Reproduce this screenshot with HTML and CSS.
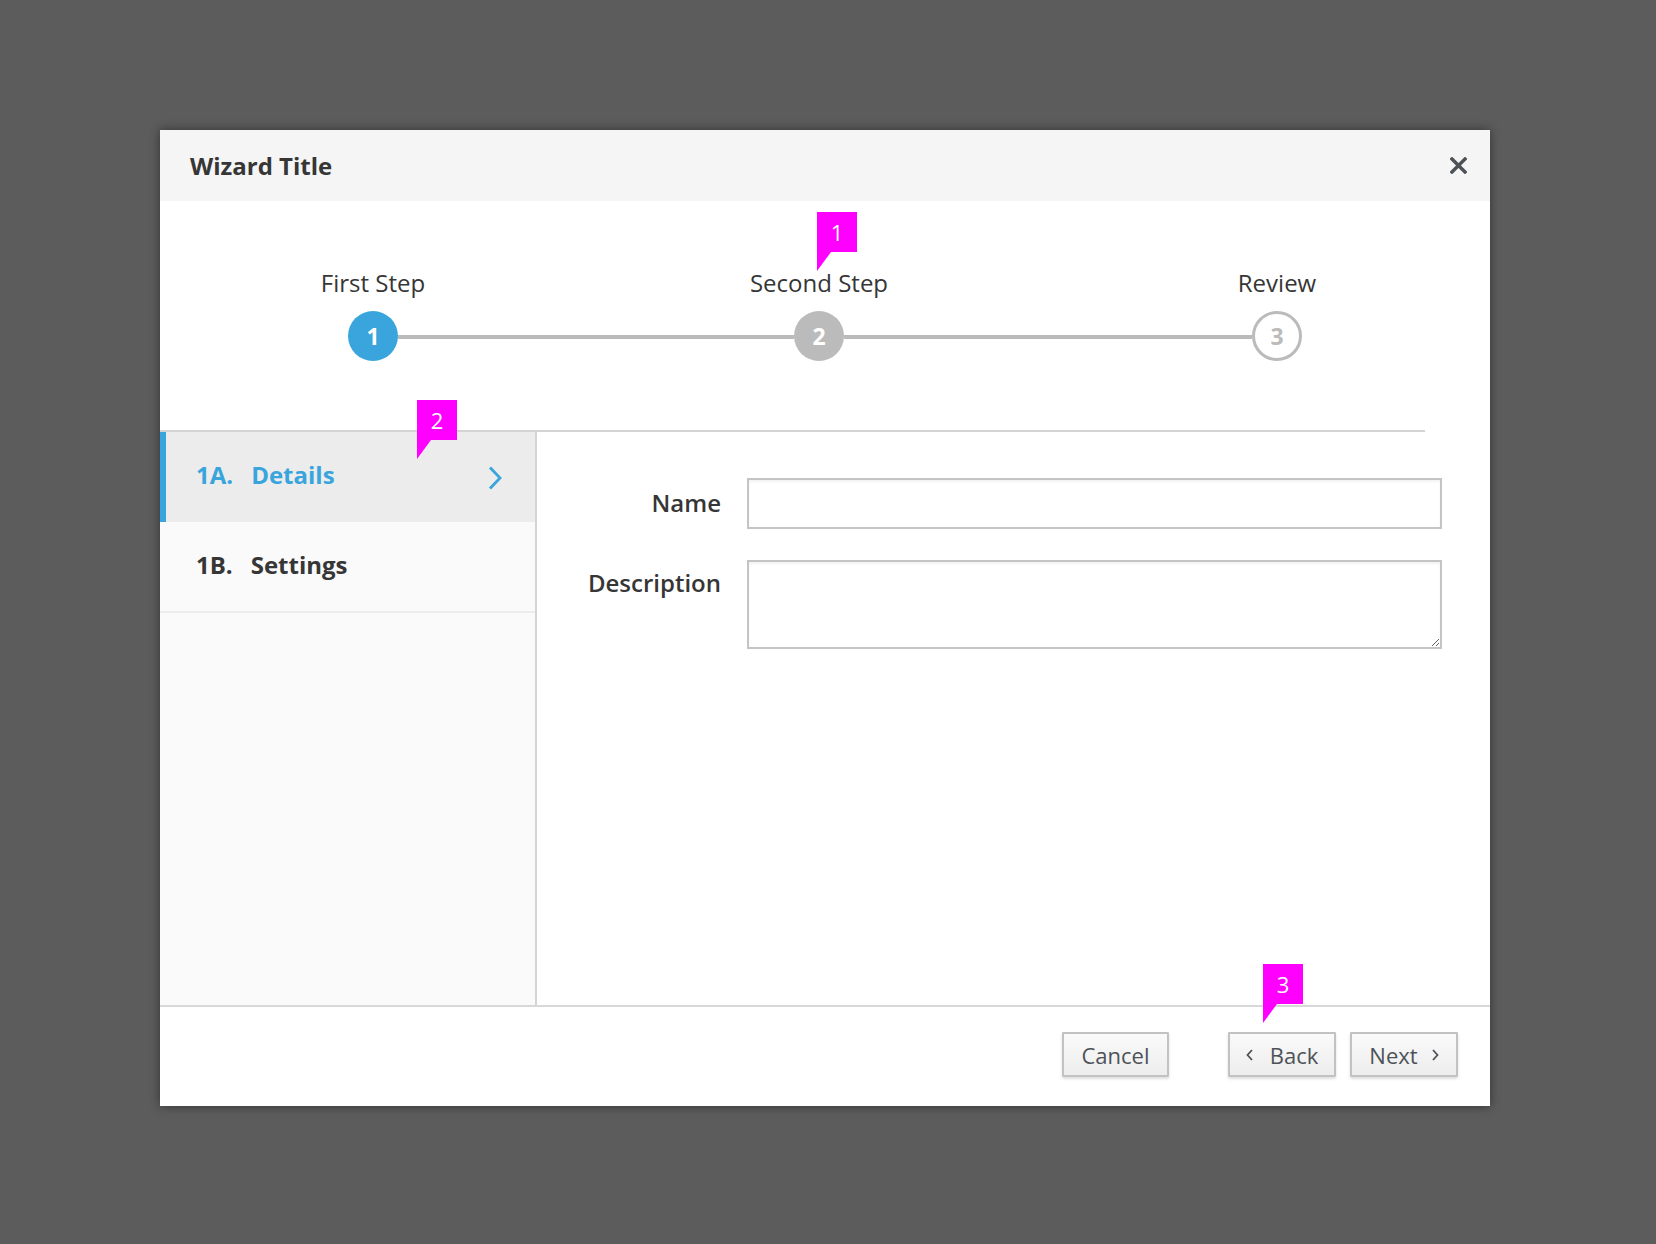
FILE: index.html
```html
<!DOCTYPE html>
<html>
<head>
<meta charset="utf-8">
<title>Wizard</title>
<link rel="stylesheet" href="styles.css">
</head>
<body>
<div class="stage">
  <div class="dialog">
    <div class="header">
      <h1 class="title">Wizard Title</h1>
      <button class="close" aria-label="Close">
        <svg width="17" height="17" viewBox="0 0 17 17"><path d="M2 2 L15 15 M15 2 L2 15" stroke="#4d5258" stroke-width="3.4" stroke-linecap="square" fill="none"/></svg>
      </button>
    </div>

    <div class="steps">
      <div class="step">
        <div class="step-label">First Step</div>
        <div class="step-circle active">1</div>
      </div>
      <div class="connector c1"></div>
      <div class="step">
        <div class="step-label">Second Step</div>
        <div class="step-circle done">2</div>
      </div>
      <div class="connector c2"></div>
      <div class="step">
        <div class="step-label">Review</div>
        <div class="step-circle future">3</div>
      </div>
    </div>

    <div class="rule"></div>

    <div class="body">
      <nav class="sidebar">
        <div class="nav-item active">
          <span class="nav-num">1A.</span><span class="nav-name">Details</span>
          <svg class="nav-chev" width="14" height="24" viewBox="0 0 14 24"><path d="M2 1.5 L12 12 L2 22.5" stroke="#39a5dc" stroke-width="2.8" fill="none"/></svg>
        </div>
        <div class="nav-item">
          <span class="nav-num">1B.</span><span class="nav-name">Settings</span>
        </div>
      </nav>
      <main class="content">
        <form class="form">
          <label class="form-label lbl-name" for="name">Name</label>
          <input class="form-input" id="name" type="text">
          <label class="form-label lbl-desc" for="desc">Description</label>
          <textarea class="form-textarea" id="desc"></textarea>
        </form>
      </main>
    </div>

    <div class="footer">
      <button class="btn btn-cancel">Cancel</button>
      <button class="btn btn-back">
        <svg width="7" height="12" viewBox="0 0 7 12"><path d="M6 1 L1.5 6 L6 11" stroke="#4d5258" stroke-width="1.8" fill="none"/></svg>
        <span>Back</span>
      </button>
      <button class="btn btn-next">
        <span>Next</span>
        <svg width="7" height="12" viewBox="0 0 7 12"><path d="M1 1 L5.5 6 L1 11" stroke="#4d5258" stroke-width="1.8" fill="none"/></svg>
      </button>
    </div>

    <div class="badge badge-1">1</div>
    <div class="badge badge-2">2</div>
    <div class="badge badge-3">3</div>
  </div>
</div>
</body>
</html>
```

FILE: styles.css
```css
* {
  box-sizing: border-box;
}

html, body {
  margin: 0;
  padding: 0;
  background: #5c5c5c;
  font-family: "Open Sans", "Noto Sans", "Liberation Sans", sans-serif;
  color: #363636;
}

.stage {
  padding: 130px 0 0 160px;
  width: 1656px;
  height: 1244px;
}

.dialog {
  position: relative;
  width: 1330px;
  height: 976px;
  background: #fff;
  display: flex;
  flex-direction: column;
  box-shadow: 0 0 10px rgba(0, 0, 0, 0.45);
}

/* Header */
.header {
  height: 71px;
  flex: none;
  background: #f5f5f5;
  display: flex;
  align-items: center;
  justify-content: space-between;
  padding: 0 23px 0 30px;
}

.title {
  margin: 0;
  font-size: 24px;
  font-weight: 700;
  line-height: 32px;
  color: #363636;
}

.close {
  border: 0;
  background: none;
  padding: 0;
  width: 17px;
  height: 17px;
  display: flex;
}

/* Steps */
.steps {
  height: 229px;
  flex: none;
  display: flex;
  align-items: flex-start;
  padding: 66px 0 0 188px;
}

.step {
  width: 50px;
  flex: none;
  display: flex;
  flex-direction: column;
  align-items: center;
}

.step-label {
  font-size: 24px;
  line-height: 32px;
  white-space: nowrap;
  color: #363636;
  margin-bottom: 12px;
}

.step-circle {
  width: 50px;
  height: 50px;
  border-radius: 50%;
  display: flex;
  align-items: center;
  justify-content: center;
  font-size: 23px;
  font-weight: 700;
  color: #fff;
}

.step-circle.active {
  background: #39a5dc;
}

.step-circle.done {
  background: #bbbbbb;
}

.step-circle.future {
  background: #fff;
  border: 3px solid #bbbbbb;
  color: #bbbbbb;
}

.connector {
  flex: none;
  height: 4px;
  background: #bbbbbb;
  margin-top: 68px;
}

.c1 {
  width: 396px;
}

.c2 {
  width: 408px;
}

.rule {
  flex: none;
  height: 2px;
  background: #d4d4d4;
  margin-right: 65px;
}

/* Body */
.body {
  flex: 1;
  display: flex;
  min-height: 0;
}

.sidebar {
  width: 377px;
  flex: none;
  background: #fafafa;
  border-right: 2px solid #d4d4d4;
}

.nav-item {
  height: 90px;
  display: flex;
  align-items: flex-start;
  padding: 27px 33px 0 36px;
  font-size: 24px;
  line-height: 32px;
  font-weight: 700;
  color: #363636;
}

.nav-item + .nav-item {
  height: 91px;
  border-bottom: 2px solid #ececec;
}

.nav-item.active {
  background: #ececec;
  color: #39a5dc;
  border-left: 6px solid #39a5dc;
  padding-left: 30px;
}

.nav-num {
  margin-right: 18px;
}

.nav-chev {
  margin-left: auto;
  margin-top: 7px;
}

.content {
  flex: 1;
  padding: 46px 48px 0 0;
}

.form {
  display: grid;
  grid-template-columns: 184px 1fr;
  column-gap: 26px;
  row-gap: 31px;
  margin: 0;
}

.form-label {
  text-align: right;
  font-size: 24px;
  line-height: 32px;
  font-weight: 600;
  color: #363636;
}

.lbl-name {
  padding-top: 9px;
}

.lbl-desc {
  padding-top: 7px;
}

.form-input,
.form-textarea {
  display: block;
  width: 100%;
  margin: 0;
  border: 2px solid #c4c4c4;
  background: #fff;
  box-shadow: inset 0 2px 3px rgba(0, 0, 0, 0.05);
  font-family: inherit;
  font-size: 22px;
  border-radius: 0;
  outline: none;
}

.form-input {
  height: 51px;
}

.form-textarea {
  height: 89px;
}

/* Footer */
.footer {
  flex: none;
  height: 101px;
  border-top: 2px solid #d8d8d8;
  display: flex;
  justify-content: flex-end;
  align-items: flex-start;
  padding: 25px 32px 0 0;
}

.btn {
  height: 45px;
  border: 2px solid #c2c2c2;
  background: linear-gradient(#fafafa, #ededed);
  box-shadow: 0 2px 3px rgba(0, 0, 0, 0.13);
  font-family: inherit;
  font-size: 22px;
  color: #4d5258;
  display: flex;
  align-items: center;
  justify-content: center;
  padding: 0;
  border-radius: 1px;
}

.btn-cancel {
  width: 107px;
  margin-right: 59px;
}

.btn-back {
  width: 108px;
  gap: 17px;
  margin-right: 14px;
}

.btn-next {
  width: 108px;
  gap: 14px;
}

/* Annotation badges */
.badge {
  position: absolute;
  width: 40px;
  height: 40px;
  background: #ff00ff;
  color: #fff;
  font-size: 22px;
  line-height: 40px;
  text-align: center;
}

.badge::after {
  content: "";
  position: absolute;
  left: 0;
  top: 40px;
  width: 0;
  height: 0;
  border-top: 19px solid #ff00ff;
  border-right: 14px solid transparent;
}

.badge-1 {
  left: 657px;
  top: 82px;
}

.badge-2 {
  left: 257px;
  top: 270px;
}

.badge-3 {
  left: 1103px;
  top: 834px;
}
```
